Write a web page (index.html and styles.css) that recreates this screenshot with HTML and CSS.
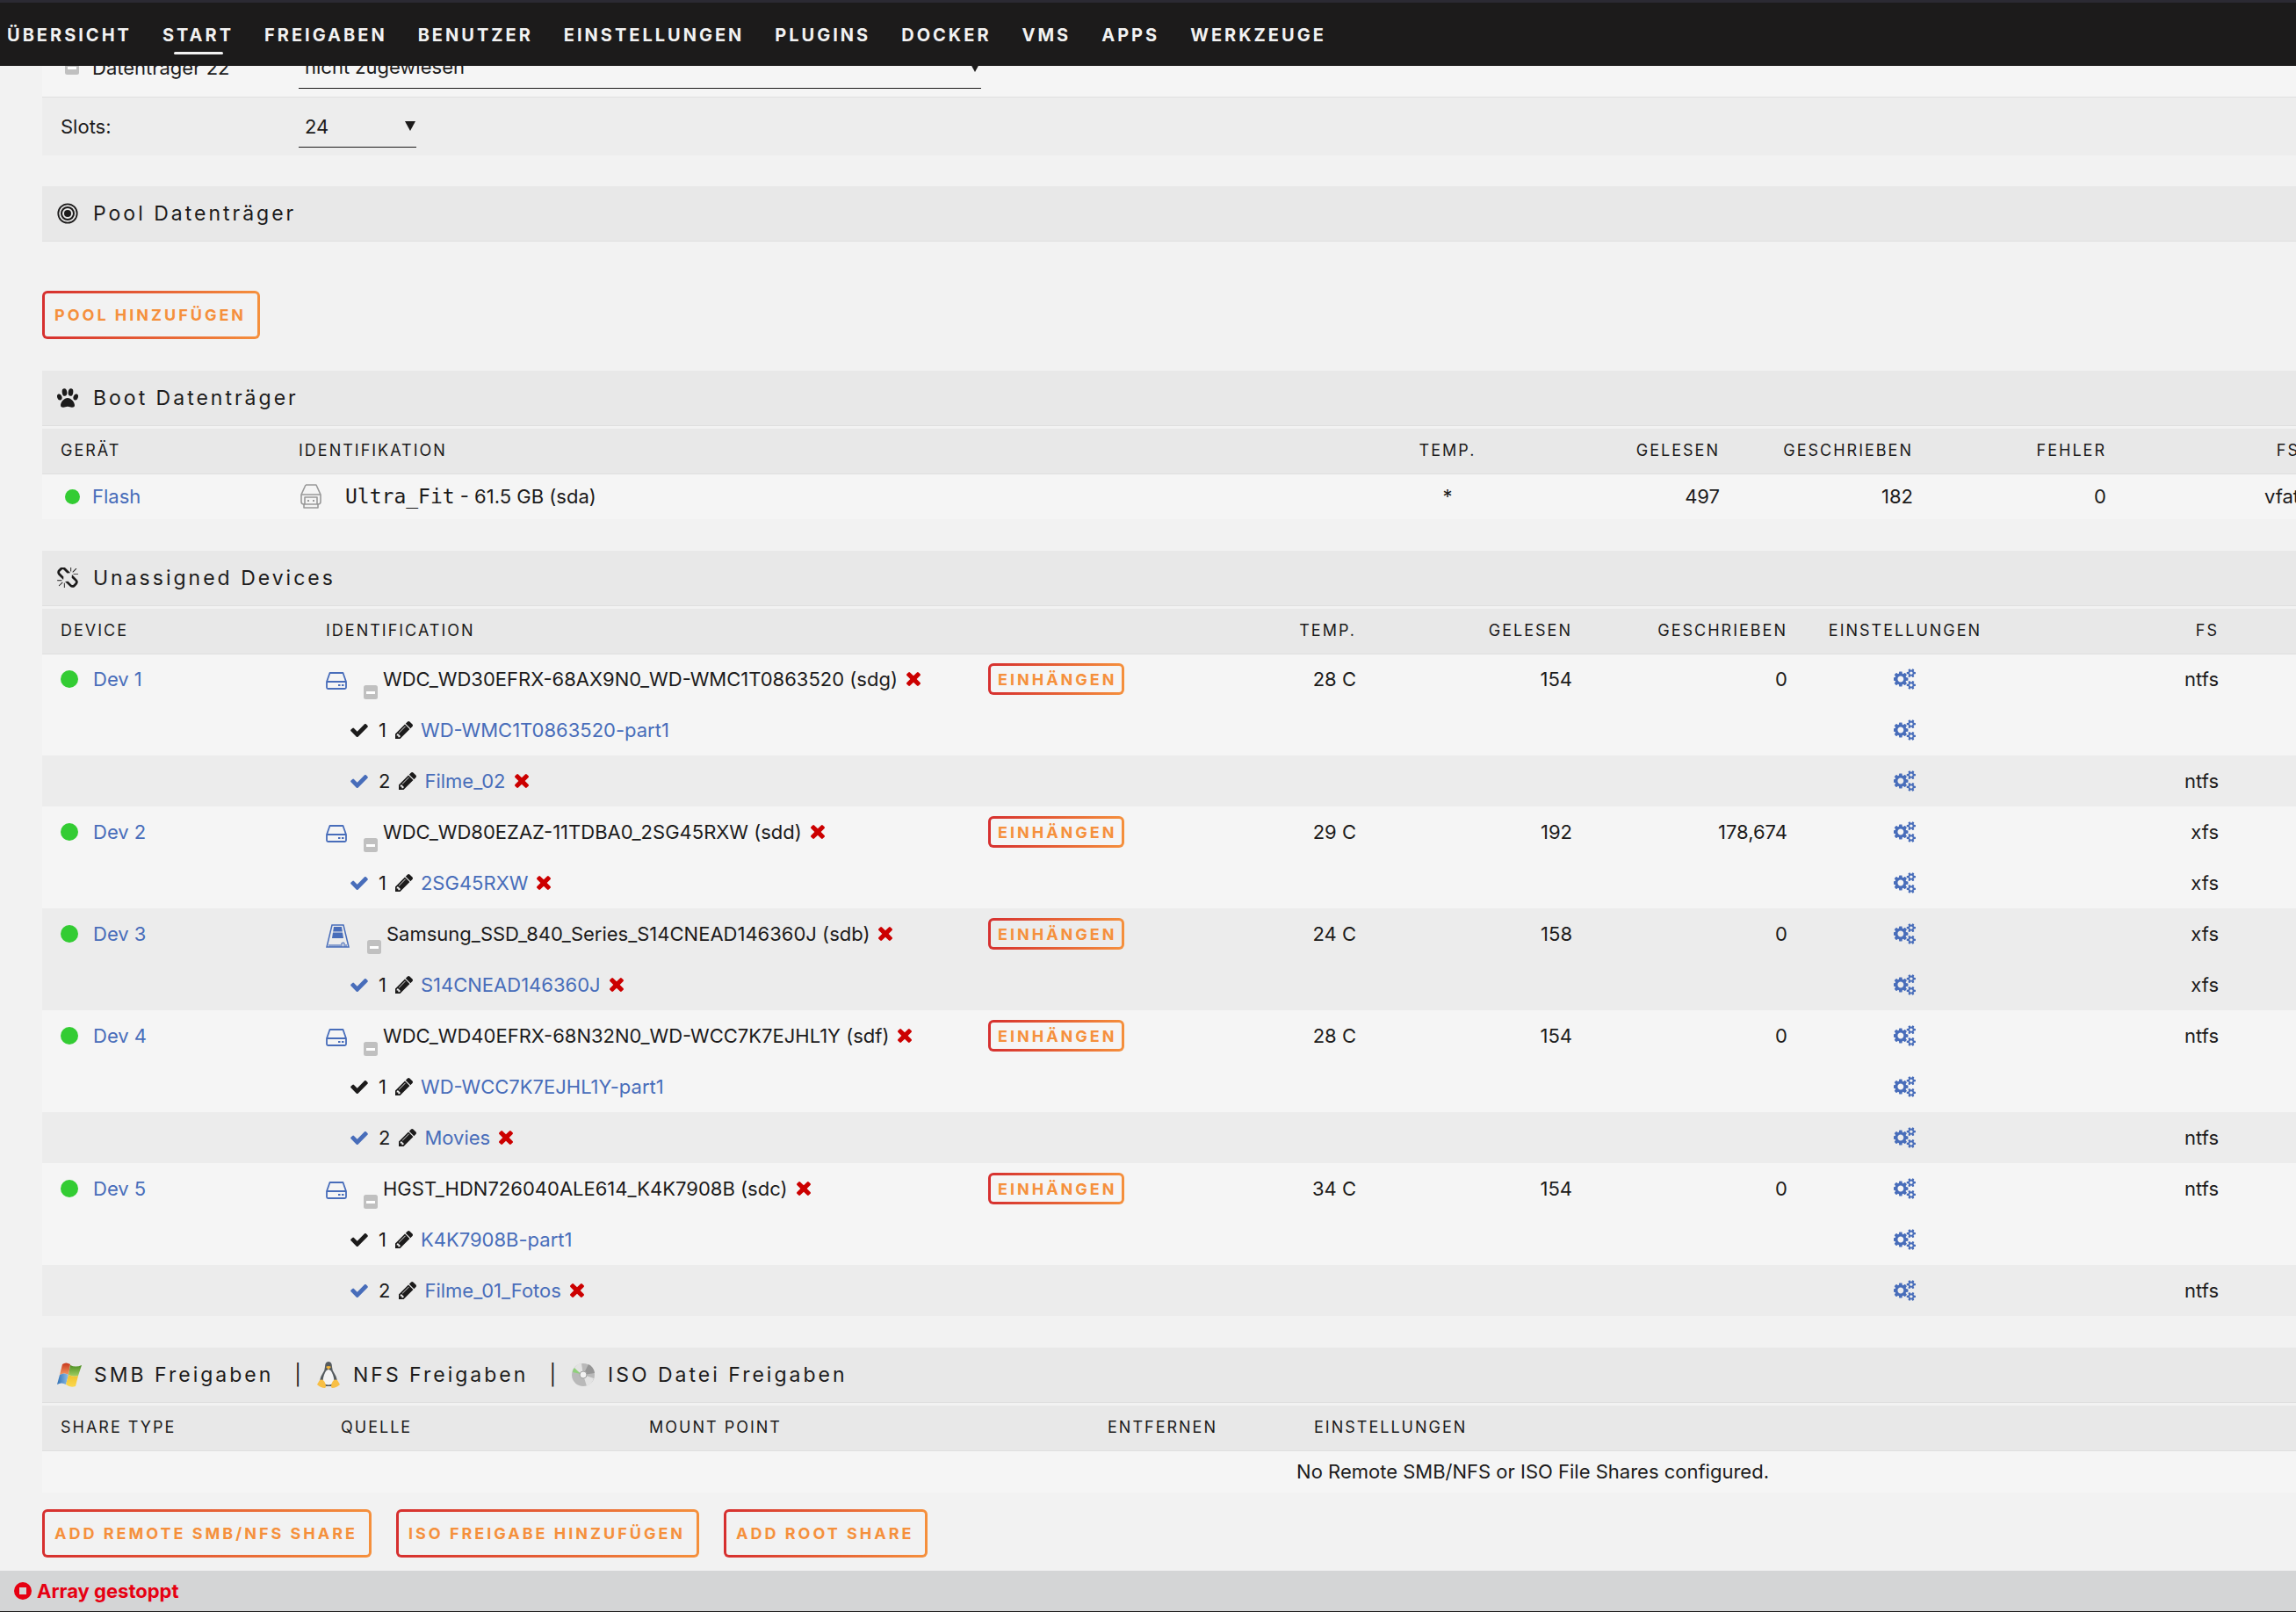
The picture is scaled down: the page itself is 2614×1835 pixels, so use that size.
FILE: index.html
```
<!DOCTYPE html>
<html lang="de">

<head>
    <meta charset="UTF-8">
    <title>Start</title>
    <link rel="stylesheet" href="styles.css">
</head>

<body>
    <svg class="sprite" aria-hidden="true">
        <symbol id="i-check" viewBox="121 338 1550 1184">
            <path d="M1671 566q0 40-28 68l-724 724-136 136q-28 28-68 28t-68-28l-136-136-362-362q-28-28-28-68t28-68l136-136q28-28 68-28t68 28l294 295 656-657q28-28 68-28t68 28l136 136q28 28 28 68z"/>
        </symbol>
        <symbol id="i-times" viewBox="302 366 1188 1188">
            <path d="M1490 1322q0 40-28 68l-136 136q-28 28-68 28t-68-28l-294-294-294 294q-28 28-68 28t-68-28l-136-136q-28-28-28-68t28-68l294-294-294-294q-28-28-28-68t28-68l136-136q28-28 68-28t68 28l294 294 294-294q28-28 68-28t68 28l136 136q28 28 28 68t-28 68l-294 294 294 294q28 28 28 68z"/>
        </symbol>
        <symbol id="i-pencil" viewBox="128 149 1515 1515">
            <path d="M491 1536l91-91-235-235-91 91v107h128v128h107zm523-928q0-22-22-22-10 0-17 7l-542 542q-7 7-7 17 0 22 22 22 10 0 17-7l542-542q7-7 7-17zm-54-192l416 416-832 832h-416v-416zm683 96q0 53-37 90l-166 166-416-416 166-165q36-38 90-38 53 0 91 38l235 234q37 39 37 91z"/>
        </symbol>
        <symbol id="i-cogs" viewBox="0 0 1920 1792">
            <path d="M832 896q0-106-75-181t-181-75-181 75-75 181 75 181 181 75 181-75 75-181zm768 512q0-52-38-90t-90-38-90 38-38 90q0 53 37.500 90.500t90.500 37.500 90.500-37.500 37.500-90.500zm0-1024q0-52-38-90t-90-38-90 38-38 90q0 53 37.500 90.500t90.500 37.500 90.500-37.500 37.500-90.500zm-384 421v185q0 10-7 19.500t-16 10.500l-155 24q-11 35-32 76 34 48 90 115 7 11 7 20 0 12-7 19-23 30-82.500 89.500t-78.500 59.500q-11 0-21-7l-115-90q-37 19-77 31-11 108-23 155-7 24-30 24h-186q-11 0-20-7.500t-10-17.500l-23-153q-34-10-75-31l-118 89q-7 7-20 7-11 0-21-8-144-133-144-160 0-9 7-19 10-14 41-53t47-61q-23-44-35-82l-152-24q-10-1-17-9.500t-7-19.500v-185q0-10 7-19.500t16-10.500l155-24q11-35 32-76-34-48-90-115-7-11-7-20 0-12 7-20 22-30 82-89t79-59q11 0 21 7l115 90q34-18 77-32 11-108 23-154 7-24 30-24h186q11 0 20 7.500t10 17.500l23 153q34 10 75 31l118-89q8-7 20-7 11 0 21 8 144 133 144 160 0 8-7 19-12 16-42 54t-45 60q23 48 34 82l152 23q10 2 17 10.500t7 19.500zm640 533v140q0 16-149 31-12 27-30 52 51 113 51 138 0 4-4 7-122 71-124 71-8 0-46-47t-52-68q-20 2-30 2t-30-2q-14 21-52 68t-46 47q-2 0-124-71-4-3-4-7 0-25 51-138-18-25-30-52-149-15-149-31v-140q0-16 149-31 13-29 30-52-51-113-51-138 0-4 4-7 4-2 35-20t59-34 30-16q8 0 46 46.500t52 67.500q20-2 30-2t30 2q51-71 92-112l6-2q4 0 124 70 4 3 4 7 0 25-51 138 17 23 30 52 149 15 149 31zm0-1024v140q0 16-149 31-12 27-30 52 51 113 51 138 0 4-4 7-122 71-124 71-8 0-46-47t-52-68q-20 2-30 2t-30-2q-14 21-52 68t-46 47q-2 0-124-71-4-3-4-7 0-25 51-138-18-25-30-52-149-15-149-31v-140q0-16 149-31 13-29 30-52-51-113-51-138 0-4 4-7 4-2 35-20t59-34 30-16q8 0 46 46.500t52 67.500q20-2 30-2t30 2q51-71 92-112l6-2q4 0 124 70 4 3 4 7 0 25-51 138 17 23 30 52 149 15 149 31z"/>
        </symbol>
        <symbol id="i-unlink" viewBox="0 64 1664 1664">
            <path d="M439 1271l-256 256q-11 9-23 9t-23-9q-9-10-9-23t9-23l256-256q10-9 23-9t23 9q9 10 9 23t-9 23zm169 41v320q0 14-9 23t-23 9-23-9-9-23v-320q0-14 9-23t23-9 23 9 9 23zm-224-224q0 14-9 23t-23 9h-320q-14 0-23-9t-9-23 9-23 23-9h320q14 0 23 9t9 23zm1264 128q0 120-85 203l-147 146q-83 83-203 83-121 0-204-85l-334-335q-21-21-42-56l239-18 273 274q28 28 68 27.500t68-27.500l147-146q28-28 28-67 0-40-28-68l-274-275 18-239q35 21 56 42l336 336q84 86 84 204zm-617-724l-239 18-273-274q-28-28-68-28-39 0-68 27l-147 146q-28 28-28 67 0 40 28 68l274 274-18 240q-35-21-56-42l-336-336q-84-86-84-204 0-120 85-203l147-146q83-83 203-83 121 0 204 85l334 335q21 21 42 56zm633 84q0 14-9 23t-23 9h-320q-14 0-23-9t-9-23 9-23 23-9h320q14 0 23 9t9 23zm-544-544v320q0 14-9 23t-23 9-23-9-9-23v-320q0-14 9-23t23-9 23 9 9 23zm407 151l-256 256q-11 9-23 9t-23-9q-9-10-9-23t9-23l256-256q10-9 23-9t23 9q9 10 9 23t-9 23z"/>
        </symbol>
        <symbol id="i-paw" viewBox="0 0 24 22">
            <ellipse cx="8.500" cy="4.500" rx="2.800" ry="4.300" transform="rotate(-8 8.500 4.500)"/>
            <ellipse cx="15.500" cy="4.500" rx="2.800" ry="4.300" transform="rotate(8 15.500 4.500)"/>
            <ellipse cx="2.800" cy="10" rx="2.600" ry="3.600" transform="rotate(-20 2.800 10)"/>
            <ellipse cx="21.200" cy="10" rx="2.600" ry="3.600" transform="rotate(20 21.200 10)"/>
            <path d="M12 11c3.800 0 8 4.700 8 8.300 0 1.800-1.300 2.500-3 2.500-2 0-3-1-5-1s-3 1-5 1c-1.700 0-3-.7-3-2.500C4 15.700 8.200 11 12 11z"/>
        </symbol>
        <symbol id="i-target" viewBox="0 0 24 24">
            <circle cx="12" cy="12" r="10.700" fill="none" stroke="currentColor" stroke-width="1.800"/>
            <circle cx="12" cy="12" r="7" fill="none" stroke="currentColor" stroke-width="2"/>
            <circle cx="12" cy="12" r="4"/>
        </symbol>
        <symbol id="i-disk" viewBox="0 0 24 20">
            <path d="M4.500 1h15L23 11H1zM1 11v6.500q0 1.500 1.500 1.500h19q1.500 0 1.500-1.500V11z" fill="none" stroke="currentColor" stroke-width="1.800" stroke-linejoin="round"/>
            <path d="M14 14h2.500v2H14zM18 14h2.500v2H18z"/>
        </symbol>
        <symbol id="i-usb" viewBox="0 0 24 28">
            <g fill="none" stroke="currentColor" stroke-width="1.600" stroke-linejoin="round">
                <path d="M6 1h12l5 11v8q0 3-3 3h-1M5 23H4q-3 0-3-3v-8L6 1M1 12h22"/>
                <path d="M5 15h14v8H5zM4 23h16v4H4z"/>
            </g>
            <path d="M8 18h2v2H8zM14 18h2v2h-2z"/>
        </symbol>
        <symbol id="i-ssd" viewBox="0 0 27 27">
            <path d="M7 1h13l6 25H1z" fill="none" stroke="currentColor" stroke-width="1.500"/>
            <path d="M9 3h9l2 13H7z"/>
            <path d="M7 9h13" stroke="#ececec" stroke-width="1"/>
            <path d="M4 26v-3M6 26v-3M8 26v-3M10 26v-3M12 26v-3M14 26v-3M16 26v-3M18 26v-4q2-2 3 0v4M23 26v-3" fill="none" stroke="currentColor" stroke-width="1.200"/>
        </symbol>
        <symbol id="i-minus" viewBox="0 0 16 16">
            <rect width="16" height="16" rx="2.500" fill="#c0c0c0"/>
            <path d="M3 7h10v3H3z" fill="#fff"/>
        </symbol>
    </svg>

    <header>
        <nav>
            <a href="#">ÜBERSICHT</a>
            <a href="#" class="active">START</a>
            <a href="#">FREIGABEN</a>
            <a href="#">BENUTZER</a>
            <a href="#">EINSTELLUNGEN</a>
            <a href="#">PLUGINS</a>
            <a href="#">DOCKER</a>
            <a href="#">VMS</a>
            <a href="#">APPS</a>
            <a href="#">WERKZEUGE</a>
        </nav>
    </header>

    <main>
        <section class="array">
            <div class="slot">
                <label for="disk22"><svg class="minus"><use href="#i-minus"/></svg>Datenträger 22</label>
                <span class="select wide"><select id="disk22"><option>nicht zugewiesen</option></select></span>
            </div>
            <div class="slot">
                <label for="slots">Slots:</label>
                <span class="select"><select id="slots"><option>24</option></select></span>
            </div>
        </section>

        <section class="pool">
            <h2><svg class="title-icon"><use href="#i-target"/></svg>Pool Datenträger</h2>
            <div class="buttons"><button>POOL HINZUFÜGEN</button></div>
        </section>

        <section>
            <h2><svg class="title-icon"><use href="#i-paw"/></svg>Boot Datenträger</h2>
            <table class="boot">
                <thead>
                    <tr>
                        <th class="b-dev">GERÄT</th>
                        <th>IDENTIFIKATION</th>
                        <th class="b-num center">TEMP.</th>
                        <th class="b-num num">GELESEN</th>
                        <th class="b-num num">GESCHRIEBEN</th>
                        <th class="b-num num">FEHLER</th>
                        <th class="b-num num">FS</th>
                    </tr>
                </thead>
                <tbody>
                    <tr>
                        <td><span class="line"><i class="dot small"></i><a href="#">Flash</a></span></td>
                        <td><span class="line flash"><svg class="usb"><use href="#i-usb"/></svg><span><span class="mono">Ultra_Fit</span> - 61.5 GB (sda)</span></span></td>
                        <td class="center">*</td>
                        <td class="num">497</td>
                        <td class="num">182</td>
                        <td class="num">0</td>
                        <td class="num">vfat</td>
                    </tr>
                </tbody>
            </table>
        </section>

        <section>
            <h2><svg class="title-icon"><use href="#i-unlink"/></svg>Unassigned Devices</h2>
            <table class="devices">
                <thead>
                    <tr>
                        <th class="u-dev">DEVICE</th>
                        <th class="u-id">IDENTIFICATION</th>
                        <th class="u-mount"></th>
                        <th class="u-temp num">TEMP.</th>
                        <th class="u-read num">GELESEN</th>
                        <th class="u-write num">GESCHRIEBEN</th>
                        <th class="u-set center">EINSTELLUNGEN</th>
                        <th class="u-fs num">FS</th>
                        <th></th>
                    </tr>
                </thead>
                <tbody>
                    <tr>
                        <td><span class="line"><i class="dot"></i><a href="#">Dev 1</a></span></td>
                        <td><span class="line"><svg class="disk"><use href="#i-disk"/></svg><svg class="minus low"><use href="#i-minus"/></svg>WDC_WD30EFRX-68AX9N0_WD-WMC1T0863520 (sdg)<svg class="times"><use href="#i-times"/></svg></span></td>
                        <td><button class="mount">EINHÄNGEN</button></td>
                        <td class="num">28 C</td>
                        <td class="num">154</td>
                        <td class="num">0</td>
                        <td class="center"><a href="#" aria-label="Einstellungen"><svg class="cogs"><use href="#i-cogs"/></svg></a></td>
                        <td class="num">ntfs</td>
                        <td></td>
                    </tr>
                    <tr>
                        <td></td>
                        <td><span class="line part"><svg class="check"><use href="#i-check"/></svg>1<svg class="pencil"><use href="#i-pencil"/></svg><a href="#">WD-WMC1T0863520-part1</a></span></td>
                        <td></td>
                        <td></td>
                        <td></td>
                        <td></td>
                        <td class="center"><a href="#" aria-label="Einstellungen"><svg class="cogs"><use href="#i-cogs"/></svg></a></td>
                        <td></td>
                        <td></td>
                    </tr>
                    <tr class="dark">
                        <td></td>
                        <td><span class="line part"><svg class="check blue"><use href="#i-check"/></svg>2<svg class="pencil"><use href="#i-pencil"/></svg><a href="#">Filme_02</a><svg class="times"><use href="#i-times"/></svg></span></td>
                        <td></td>
                        <td></td>
                        <td></td>
                        <td></td>
                        <td class="center"><a href="#" aria-label="Einstellungen"><svg class="cogs"><use href="#i-cogs"/></svg></a></td>
                        <td class="num">ntfs</td>
                        <td></td>
                    </tr>
                    <tr>
                        <td><span class="line"><i class="dot"></i><a href="#">Dev 2</a></span></td>
                        <td><span class="line"><svg class="disk"><use href="#i-disk"/></svg><svg class="minus low"><use href="#i-minus"/></svg>WDC_WD80EZAZ-11TDBA0_2SG45RXW (sdd)<svg class="times"><use href="#i-times"/></svg></span></td>
                        <td><button class="mount">EINHÄNGEN</button></td>
                        <td class="num">29 C</td>
                        <td class="num">192</td>
                        <td class="num">178,674</td>
                        <td class="center"><a href="#" aria-label="Einstellungen"><svg class="cogs"><use href="#i-cogs"/></svg></a></td>
                        <td class="num">xfs</td>
                        <td></td>
                    </tr>
                    <tr>
                        <td></td>
                        <td><span class="line part"><svg class="check blue"><use href="#i-check"/></svg>1<svg class="pencil"><use href="#i-pencil"/></svg><a href="#">2SG45RXW</a><svg class="times"><use href="#i-times"/></svg></span></td>
                        <td></td>
                        <td></td>
                        <td></td>
                        <td></td>
                        <td class="center"><a href="#" aria-label="Einstellungen"><svg class="cogs"><use href="#i-cogs"/></svg></a></td>
                        <td class="num">xfs</td>
                        <td></td>
                    </tr>
                    <tr class="dark">
                        <td><span class="line"><i class="dot"></i><a href="#">Dev 3</a></span></td>
                        <td><span class="line"><svg class="ssd"><use href="#i-ssd"/></svg><svg class="minus low"><use href="#i-minus"/></svg>Samsung_SSD_840_Series_S14CNEAD146360J (sdb)<svg class="times"><use href="#i-times"/></svg></span></td>
                        <td><button class="mount">EINHÄNGEN</button></td>
                        <td class="num">24 C</td>
                        <td class="num">158</td>
                        <td class="num">0</td>
                        <td class="center"><a href="#" aria-label="Einstellungen"><svg class="cogs"><use href="#i-cogs"/></svg></a></td>
                        <td class="num">xfs</td>
                        <td></td>
                    </tr>
                    <tr class="dark">
                        <td></td>
                        <td><span class="line part"><svg class="check blue"><use href="#i-check"/></svg>1<svg class="pencil"><use href="#i-pencil"/></svg><a href="#">S14CNEAD146360J</a><svg class="times"><use href="#i-times"/></svg></span></td>
                        <td></td>
                        <td></td>
                        <td></td>
                        <td></td>
                        <td class="center"><a href="#" aria-label="Einstellungen"><svg class="cogs"><use href="#i-cogs"/></svg></a></td>
                        <td class="num">xfs</td>
                        <td></td>
                    </tr>
                    <tr>
                        <td><span class="line"><i class="dot"></i><a href="#">Dev 4</a></span></td>
                        <td><span class="line"><svg class="disk"><use href="#i-disk"/></svg><svg class="minus low"><use href="#i-minus"/></svg>WDC_WD40EFRX-68N32N0_WD-WCC7K7EJHL1Y (sdf)<svg class="times"><use href="#i-times"/></svg></span></td>
                        <td><button class="mount">EINHÄNGEN</button></td>
                        <td class="num">28 C</td>
                        <td class="num">154</td>
                        <td class="num">0</td>
                        <td class="center"><a href="#" aria-label="Einstellungen"><svg class="cogs"><use href="#i-cogs"/></svg></a></td>
                        <td class="num">ntfs</td>
                        <td></td>
                    </tr>
                    <tr>
                        <td></td>
                        <td><span class="line part"><svg class="check"><use href="#i-check"/></svg>1<svg class="pencil"><use href="#i-pencil"/></svg><a href="#">WD-WCC7K7EJHL1Y-part1</a></span></td>
                        <td></td>
                        <td></td>
                        <td></td>
                        <td></td>
                        <td class="center"><a href="#" aria-label="Einstellungen"><svg class="cogs"><use href="#i-cogs"/></svg></a></td>
                        <td></td>
                        <td></td>
                    </tr>
                    <tr class="dark">
                        <td></td>
                        <td><span class="line part"><svg class="check blue"><use href="#i-check"/></svg>2<svg class="pencil"><use href="#i-pencil"/></svg><a href="#">Movies</a><svg class="times"><use href="#i-times"/></svg></span></td>
                        <td></td>
                        <td></td>
                        <td></td>
                        <td></td>
                        <td class="center"><a href="#" aria-label="Einstellungen"><svg class="cogs"><use href="#i-cogs"/></svg></a></td>
                        <td class="num">ntfs</td>
                        <td></td>
                    </tr>
                    <tr>
                        <td><span class="line"><i class="dot"></i><a href="#">Dev 5</a></span></td>
                        <td><span class="line"><svg class="disk"><use href="#i-disk"/></svg><svg class="minus low"><use href="#i-minus"/></svg>HGST_HDN726040ALE614_K4K7908B (sdc)<svg class="times"><use href="#i-times"/></svg></span></td>
                        <td><button class="mount">EINHÄNGEN</button></td>
                        <td class="num">34 C</td>
                        <td class="num">154</td>
                        <td class="num">0</td>
                        <td class="center"><a href="#" aria-label="Einstellungen"><svg class="cogs"><use href="#i-cogs"/></svg></a></td>
                        <td class="num">ntfs</td>
                        <td></td>
                    </tr>
                    <tr>
                        <td></td>
                        <td><span class="line part"><svg class="check"><use href="#i-check"/></svg>1<svg class="pencil"><use href="#i-pencil"/></svg><a href="#">K4K7908B-part1</a></span></td>
                        <td></td>
                        <td></td>
                        <td></td>
                        <td></td>
                        <td class="center"><a href="#" aria-label="Einstellungen"><svg class="cogs"><use href="#i-cogs"/></svg></a></td>
                        <td></td>
                        <td></td>
                    </tr>
                    <tr class="dark">
                        <td></td>
                        <td><span class="line part"><svg class="check blue"><use href="#i-check"/></svg>2<svg class="pencil"><use href="#i-pencil"/></svg><a href="#">Filme_01_Fotos</a><svg class="times"><use href="#i-times"/></svg></span></td>
                        <td></td>
                        <td></td>
                        <td></td>
                        <td></td>
                        <td class="center"><a href="#" aria-label="Einstellungen"><svg class="cogs"><use href="#i-cogs"/></svg></a></td>
                        <td class="num">ntfs</td>
                        <td></td>
                    </tr>
                </tbody>
            </table>
        </section>

        <section>
            <h2 class="shares-title">
                <svg class="logo" viewBox="0 0 28 30">
                    <defs>
                        <linearGradient id="wr" x2="0" y2="1"><stop stop-color="#c8371c"/><stop offset="1" stop-color="#f39a63"/></linearGradient>
                        <linearGradient id="wg" x2="0" y2="1"><stop stop-color="#4b8f22"/><stop offset="1" stop-color="#a4cf63"/></linearGradient>
                        <linearGradient id="wb" x2="1" y2="0"><stop stop-color="#2f6fb5"/><stop offset="1" stop-color="#8fc0e8"/></linearGradient>
                        <linearGradient id="wy" x2="0" y2="1"><stop stop-color="#f0c02c"/><stop offset="1" stop-color="#fbd84d"/></linearGradient>
                    </defs>
                    <path d="M6 3q4-3 9 0l-2 12q-5-3-10 0z" fill="url(#wr)"/>
                    <path d="M15 4q6 3 13 0l-4 12q-5 2-11-1z" fill="url(#wg)"/>
                    <path d="M3 15q5-3 10 0l-3 11q-5-3-10 0z" fill="url(#wb)"/>
                    <path d="M13 15q6 3 11 1l-3 12q-6 2-11-2z" fill="url(#wy)"/>
                </svg>
                <span>SMB Freigaben</span>
                <span class="sep">|</span>
                <svg class="logo" viewBox="0 0 28 30">
                    <path d="M14 0q4 0 4 6 0 4 3 8 4 6 2 12l-5 2h-8l-5-2q-2-6 2-12 3-4 3-8 0-6 4-6z" fill="#555b5f"/>
                    <path d="M14 9q3 0 5 6t1 9q-6 5-12 0-1-3 1-9t5-6z" fill="#f4f4f4"/>
                    <path d="M11 6q3-2 6 0l-3 3z" fill="#f5b638"/>
                    <path d="M4 21q4-2 6 3t0 6q-5 0-9-4zM24 21q-4-2-6 3t0 6q5 0 9-4z" fill="#f8bf45"/>
                </svg>
                <span>NFS Freigaben</span>
                <span class="sep">|</span>
                <svg class="logo" viewBox="0 0 28 30">
                    <circle cx="14" cy="15" r="13" fill="#b9b9b9"/>
                    <path d="M14 15L3 8q4-6 9-6zM14 15l12 4q-2 7-8 9z" fill="#e3e3e3"/>
                    <path d="M14 15L20 3q6 3 7 10z" fill="#969696"/>
                    <path d="M11 14L2 12q0-3 2-5z" fill="#8fd07a"/>
                    <circle cx="14" cy="15" r="4" fill="#f2f2f2" stroke="#a0a0a0"/>
                </svg>
                <span>ISO Datei Freigaben</span>
            </h2>
            <table class="shares">
                <thead>
                    <tr>
                        <th class="s-type">SHARE TYPE</th>
                        <th class="s-src">QUELLE</th>
                        <th class="s-mp">MOUNT POINT</th>
                        <th class="s-del">ENTFERNEN</th>
                        <th>EINSTELLUNGEN</th>
                    </tr>
                </thead>
                <tbody>
                    <tr>
                        <td colspan="5" class="center">No Remote SMB/NFS or ISO File Shares configured.</td>
                    </tr>
                </tbody>
            </table>
            <div class="buttons share-buttons">
                <button>ADD REMOTE SMB/NFS SHARE</button>
                <button>ISO FREIGABE HINZUFÜGEN</button>
                <button>ADD ROOT SHARE</button>
            </div>
        </section>
    </main>

    <footer>
        <svg class="stop" viewBox="0 0 20 20"><path d="M10 0a10 10 0 1 0 0 20a10 10 0 0 0 0-20zM6 6h8v8H6z" fill-rule="evenodd"/></svg>
        <span>Array gestoppt</span>
    </footer>
</body>

</html>
```
FILE: styles.css
```
* {
    box-sizing: border-box;
}

body {
    --bg: #f2f2f2;
    margin: 0;
    height: 100vh;
    display: flex;
    flex-direction: column;
    overflow: hidden;
    background-color: var(--bg);
    color: #1c1b1b;
    font-family: Inter, sans-serif;
    font-size: 22px;
    line-height: 28px;
}

svg {
    fill: currentColor;
    flex: none;
}

.sprite {
    display: none;
}

a {
    color: #486dba;
    text-decoration: none;
}

/* top menu */
header {
    position: relative;
    z-index: 1;
    flex: none;
    height: 75px;
    padding-left: 8px;
    border-top: 3px solid #2b2a33;
    background-color: #1c1b1b;
}

nav {
    display: flex;
    gap: 35px;
    padding-top: 23px;
}

nav a {
    display: flex;
    flex-direction: column;
    align-items: center;
    gap: 5px;
    color: #f2f2f2;
    font-size: 20px;
    font-weight: bold;
    line-height: 28px;
    letter-spacing: 3px;
}

nav .active::after {
    content: "";
    width: 56px;
    height: 3px;
    border-radius: 2px;
    background-color: #f2f2f2;
}

main {
    flex: 1;
    min-height: 0;
    overflow: hidden;
    padding-left: 48px;
    margin-top: -32px;
}

section {
    margin-bottom: 36px;
}

/* array slots */
.array {
    margin-bottom: 35px;
}

.slot {
    --bg: #f5f5f5;
    display: flex;
    align-items: center;
    height: 67px;
    background-color: var(--bg);
}

.slot:nth-child(2) {
    --bg: #ededed;
    border-top: 1px solid #e0e0e0;
}

.slot label {
    display: flex;
    align-items: center;
    width: 292px;
    padding-left: 21px;
}

.slot .minus {
    margin: 0 15px 0 5px;
}

.select {
    position: relative;
    width: 134px;
    height: 48px;
}

.select.wide {
    width: 777px;
}

.select::after {
    content: "";
    position: absolute;
    right: 1px;
    top: 18px;
    border: 6px solid transparent;
    border-top: 11px solid #1c1b1b;
    border-bottom: 0;
    pointer-events: none;
}

select {
    appearance: none;
    width: 100%;
    height: 100%;
    padding: 0 7px;
    border: 0;
    border-bottom: 1px solid #1c1b1b;
    background: none;
    color: inherit;
    font: inherit;
}

/* section titles */
h2 {
    display: flex;
    align-items: center;
    gap: 17px;
    height: 63px;
    margin: 0 0 3px;
    padding-left: 17px;
    border-bottom: 1px solid #dfdfdf;
    background-color: #e8e8e8;
    font-size: 23px;
    font-weight: normal;
    letter-spacing: 3px;
}

.title-icon {
    width: 24px;
    height: 24px;
}

.logo {
    width: 28px;
    height: 30px;
}

.shares-title {
    gap: 14px;
}

.sep {
    margin-left: 10px;
}

/* tables */
table {
    width: 100%;
    border-collapse: collapse;
    table-layout: fixed;
}

th {
    height: 51px;
    padding: 0;
    border-bottom: 1px solid #dfdfdf;
    background-color: #e8e8e8;
    font-size: 18px;
    font-weight: normal;
    letter-spacing: 2px;
    text-align: left;
    white-space: nowrap;
}

td {
    height: 58px;
    padding: 0;
    white-space: nowrap;
}

th:first-child,
td:first-child {
    padding-left: 21px;
}

tbody tr {
    --bg: #f5f5f5;
    background-color: var(--bg);
}

tbody .dark {
    --bg: #ececec;
}

.num {
    padding-right: 20px;
    text-align: right;
}

.center {
    text-align: center;
}

.line {
    display: flex;
    align-items: center;
}

/* the last column runs past the window edge */
.boot {
    width: calc(100% + 24px);
}

.boot td {
    height: 52px;
}

.b-dev {
    width: 292px;
}

.b-num {
    width: 220px;
}

.u-dev {
    width: 323px;
}

.u-id {
    width: 754px;
}

.u-mount {
    width: 239px;
}

.u-temp {
    width: 200px;
}

.u-read {
    width: 246px;
}

.u-write {
    width: 245px;
}

.u-set {
    width: 228px;
}

.u-fs {
    width: 263px;
}

.shares {
    width: calc(132% - 14px);
}

.shares td {
    height: 48px;
}

.s-type {
    width: 340px;
}

.s-src {
    width: 351px;
}

.s-mp {
    width: 522px;
}

.s-del {
    width: 235px;
}

/* table content */
.dot {
    width: 20px;
    height: 20px;
    margin-right: 17px;
    border-radius: 50%;
    background-color: #33cc33;
}

.dot.small {
    width: 17px;
    height: 17px;
    margin: 0 14px 0 5px;
}

.usb {
    width: 24px;
    height: 28px;
    margin: 0 27px 0 2px;
    color: #999;
}

.mono {
    font-family: "DejaVu Sans Mono", monospace;
    font-size: 23px;
}

.disk {
    width: 24px;
    height: 20px;
    margin: 4px 19px 0 0;
    color: #486dba;
}

.ssd {
    width: 27px;
    height: 27px;
    margin: 4px 20px 0 0;
    color: #486dba;
}

.minus {
    width: 16px;
    height: 16px;
}

.minus.low {
    margin: 29px 6px 0 0;
}

.times {
    width: 16px;
    height: 16px;
    margin-left: 10px;
    color: #cc0000;
}

.part {
    padding-left: 28px;
}

.check {
    width: 20px;
    height: 15px;
    margin-right: 12px;
}

.check.blue {
    color: #486dba;
}

.pencil {
    width: 20px;
    height: 20px;
    margin: 0 9px 0 10px;
}

.cogs {
    display: block;
    width: 26px;
    height: 24px;
    margin: 0 auto;
}

/* buttons */
.buttons {
    display: flex;
    gap: 28px;
    margin-top: 56px;
}

.share-buttons {
    margin-top: 19px;
}

button {
    height: 55px;
    padding: 0 13px 0 11px;
    border: 3px solid transparent;
    border-radius: 6px;
    background:
        linear-gradient(var(--bg), var(--bg)) padding-box,
        linear-gradient(90deg, #d62f2f, #f5903c) border-box;
    color: #f5903c;
    font-family: inherit;
    font-size: 18px;
    font-weight: bold;
    letter-spacing: 3px;
    white-space: nowrap;
}

button.mount {
    display: block;
    height: 36px;
    padding: 0 6px 0 8px;
}

/* status bar */
footer {
    position: relative;
    z-index: 1;
    flex: none;
    display: flex;
    align-items: center;
    gap: 6px;
    height: 47px;
    padding-left: 16px;
    border-bottom: 1px solid #1c1b1b;
    background-color: #d4d5d6;
    color: #e60012;
    font-weight: bold;
}

.stop {
    width: 20px;
    height: 20px;
}
```
